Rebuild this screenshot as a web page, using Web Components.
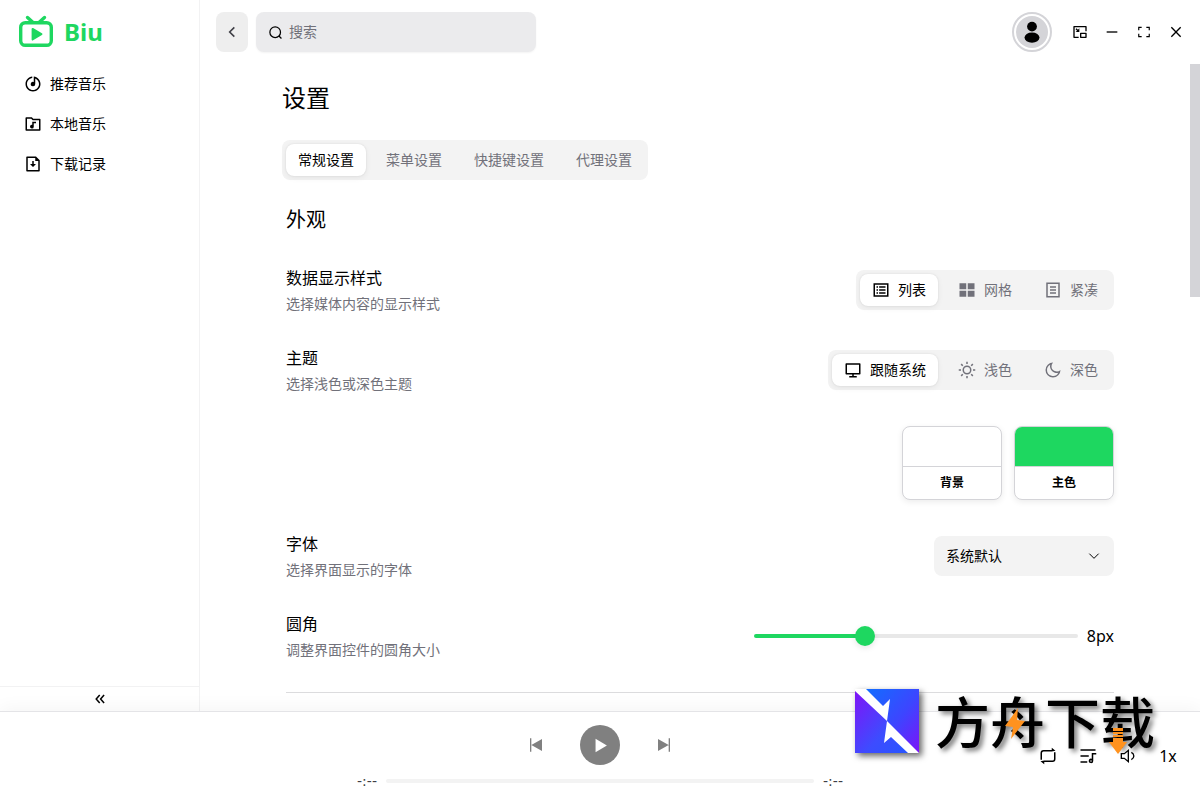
<!DOCTYPE html>
<html lang="zh-CN">
<head>
<meta charset="utf-8">
<title>Biu</title>
<style>
html,body{height:100%;margin:0}
body{font-family:"Noto Sans","Noto Sans CJK SC",sans-serif;font-size:14px;line-height:20px;color:#000;background:#fff;
--primary:#1ed760;--muted:#71717a;--soft:#f3f3f3;--edge:#d4d4d8}
</style>
</head>
<body>
<biu-app></biu-app>
<script>
const define=(name,html)=>customElements.define(name,class extends HTMLElement{
  constructor(){
    super();
    const t=document.createElement('template');
    t.innerHTML='<style>*{box-sizing:border-box}button,input,select{font:inherit;color:inherit;margin:0}button{border:0;padding:0;background:none}</style>'+html;
    this.attachShadow({mode:'open'}).append(t.content.cloneNode(true));
  }
});

const ICONS={
  logo:'<g fill="none" stroke="currentColor" stroke-width="3.4" stroke-linecap="round"><rect x="2.7" y="8.7" width="30.6" height="22.6" rx="4.6"/><path d="M9.5 3.5 14.5 8M26.5 3.5 21.5 8"/></g><path fill="currentColor" stroke="currentColor" stroke-width="2" stroke-linejoin="round" d="M14.6 14.900 23.4 20.200 14.6 25.500Z"/>',
  disc:'<path d="M15 4.58V12a3 3 0 1 1-2-2.83V2.05C18.05 2.55 22 6.81 22 12c0 5.52-4.48 10-10 10S2 17.52 2 12C2 6.81 5.95 2.55 11 2.05v2.01C7.05 4.55 4 7.92 4 12c0 4.42 3.58 8 8 8s8-3.58 8-8c0-3.36-2.07-6.23-5-7.42Z"/>',
  folder:'<path d="M12.41 5H21a1 1 0 0 1 1 1v14a1 1 0 0 1-1 1H3a1 1 0 0 1-1-1V4a1 1 0 0 1 1-1h7.41l2 2ZM4 5v14h16V7h-8.41l-2-2H4Zm7 8.05V9h5v2h-3v4.5a2.5 2.5 0 1 1-2-2.45Z"/>',
  file:'<path d="M13 12h3l-4 4-4-4h3V8h2v4Zm2-8H5v16h14V8h-4V4ZM3 3a1 1 0 0 1 1-1h12l5 5v14a1 1 0 0 1-1 1H4a1 1 0 0 1-1-1V3Z"/>',
  left:'<path fill="none" stroke="currentColor" stroke-width="2.4" d="M15.5 5 8.500 12l7 7"/>',
  search:'<g fill="none" stroke="currentColor" stroke-width="2"><circle cx="11.5" cy="11.5" r="8.5"/><path d="m17.5 17.5 4 4"/></g>',
  user:'<circle cx="12" cy="6.6" r="4.9"/><ellipse cx="12" cy="17.6" rx="7.5" ry="5.1"/>',
  pip:'<path d="M21 3a1 1 0 0 1 1 1v7h-2V5H4v14h6v2H3a1 1 0 0 1-1-1V4a1 1 0 0 1 1-1h18Zm0 10a1 1 0 0 1 1 1v6a1 1 0 0 1-1 1h-8a1 1 0 0 1-1-1v-6a1 1 0 0 1 1-1h8Zm-1 2h-6v4h6v-4ZM6.7 6.3 8.95 8.55 11 6.5V12H5.5l2.05-2.05L5.3 7.7Z"/>',
  minus:'<path d="M4 11h16v2H4z"/>',
  full:'<path d="M8 3v2H4v4H2V3h6ZM2 21v-6h2v4h4v2H2Zm20 0h-6v-2h4v-4h2v6Zm0-12h-2V5h-4V3h6v6Z"/>',
  close:'<path fill="none" stroke="currentColor" stroke-width="2" d="m5 5 14 14M19 5 5 19"/>',
  list:'<path fill-rule="evenodd" d="M2 3h20v18H2ZM4 5v14h16V5ZM6 7h2v2H6Zm3.500 0H18v2H9.500ZM6 11h2v2H6Zm3.500 0H18v2H9.500ZM6 15h2v2H6Zm3.500 0H18v2H9.500Z"/>',
  grid:'<path d="M2 3h9v8H2Zm11 0h9v8h-9ZM2 13h9v8H2Zm11 0h9v8h-9Z"/>',
  page:'<path fill-rule="evenodd" d="M3 2h18v20H3ZM5 4v16h14V4ZM8 7h8v2H8Zm0 4h8v2H8Zm0 4h8v2H8Z"/>',
  screen:'<path d="M4 16h16V5H4v11Zm9 2v2h4v2H7v-2h4v-2H3a1 1 0 0 1-1-1V4a1 1 0 0 1 1-1h18a1 1 0 0 1 1 1v13a1 1 0 0 1-1 1h-8Z"/>',
  sun:'<g fill="none" stroke="currentColor" stroke-width="2"><circle cx="12" cy="12" r="5"/><path d="M12 1v3M12 20v3M1 12h3M20 12h3M4.200 4.200l2.200 2.200M17.600 17.600l2.200 2.200M4.200 19.800l2.200-2.200M17.600 6.400l2.200-2.200"/></g>',
  moon:'<path d="M10 7a7 7 0 0 0 12 4.900V12A10 10 0 1 1 12.100 2 7 7 0 0 0 10 7Zm-6 5a8 8 0 0 0 15.060 3.760A9 9 0 0 1 8.240 4.940 8 8 0 0 0 4 12Z"/>',
  down:'<path fill="none" stroke="currentColor" stroke-width="1.500" d="m5 8.500 7 7 7-7"/>',
  fold:'<path fill="none" stroke="currentColor" stroke-width="2.600" d="m11.500 5-6 7 6 7M19 5l-6 7 6 7"/>',
  prev:'<path d="M3 2h2v20H3ZM5 12 21 3v18Z"/>',
  next:'<path d="M19 2h2v20h-2ZM19 12 3 3v18Z"/>',
  play:'<path d="M5 2.500v19L21 12Z"/>',
  repeat:'<path d="M6 4h11V1l5 4-5 1H6a2 2 0 0 0-2 2v9H2V8a4 4 0 0 1 4-4Zm12 16H7v3l-5-4 5-1h11a2 2 0 0 0 2-2V7h2v9a4 4 0 0 1-4 4Z"/>',
  queue:'<path d="M2 3h20v2H2Zm0 8h11v2H2Zm0 8h9v2H2ZM17 8h6v2h-4v8.500a3 3 0 1 1-2-2.830V8Zm-1 9.500a1 1 0 1 0 0 2 1 1 0 0 0 0-2Z"/>',
  volume:'<g fill="none" stroke="currentColor" stroke-width="2"><path d="M2 8.500h4.500l6-5v17l-6-5H2ZM17 6.500c5 2.500 5 8.500 0 11"/></g>'
};
customElements.define('ui-icon',class extends HTMLElement{
  connectedCallback(){
    if(this.shadowRoot) return;
    const n=this.getAttribute('name'),s=this.getAttribute('size')||18,b=n==='logo'?36:24;
    this.attachShadow({mode:'open'}).innerHTML=`<style>:host{display:inline-flex;flex:none}svg{display:block}</style><svg width="${s}" height="${s}" viewBox="0 0 ${b} ${b}" fill="currentColor" aria-hidden="true">${ICONS[n]}</svg>`;
  }
});

define('nav-item',`<style>
:host{display:block}
a{display:flex;align-items:center;gap:8px;height:40px;padding:0 16px;color:#000;text-decoration:none}
</style><a href="#"><slot name="icon"></slot><slot></slot></a>`);

define('side-bar',`<style>
:host{display:flex;flex-direction:column;width:200px;border-right:1px solid #f2f2f3;box-sizing:border-box}
.brand{display:flex;align-items:center;gap:10px;height:64px;padding:0 18px;color:var(--primary);font-size:24px;font-weight:700;line-height:32px}
nav{flex:1;padding:0 8px}
button{height:25px;border-top:1px solid #f2f2f3;display:flex;align-items:center;justify-content:center}
</style>
<div class="brand"><ui-icon name="logo" size="36"></ui-icon><span>Biu</span></div>
<nav>
<nav-item><ui-icon slot="icon" name="disc"></ui-icon>推荐音乐</nav-item>
<nav-item><ui-icon slot="icon" name="folder"></ui-icon>本地音乐</nav-item>
<nav-item><ui-icon slot="icon" name="file"></ui-icon>下载记录</nav-item>
</nav>
<button aria-label="收起"><ui-icon name="fold" size="14"></ui-icon></button>`);

define('top-bar',`<style>
:host{display:flex;align-items:center;height:64px;padding:0 8px 0 16px;gap:8px}
.back{width:32px;height:40px;border-radius:8px;background:#eee;display:grid;place-items:center;color:#3f3f46}
label{display:flex;align-items:center;gap:6px;width:280px;height:40px;padding:0 12px;border-radius:8px;background:#ebebed;box-shadow:0 1px 2px #0000000d}
input{flex:1;min-width:0;border:0;background:none;outline:0;padding:0}
input::placeholder{color:var(--muted);opacity:1}
.win{margin-left:auto;display:flex;align-items:center}
.win button{width:32px;height:32px;display:grid;place-items:center}
.win .avatar{width:40px;height:40px;border-radius:50%;border:2px solid var(--edge);padding:2px;background:var(--edge) content-box;margin-right:12px}
</style>
<button class="back" aria-label="返回"><ui-icon name="left" size="16"></ui-icon></button>
<label><ui-icon name="search" size="15"></ui-icon><input type="text" placeholder="搜索" aria-label="搜索"></label>
<div class="win">
<button class="avatar" aria-label="用户"><ui-icon name="user" size="24"></ui-icon></button>
<button aria-label="小窗"><ui-icon name="pip" size="16"></ui-icon></button>
<button aria-label="最小化"><ui-icon name="minus" size="16"></ui-icon></button>
<button aria-label="全屏"><ui-icon name="full" size="14"></ui-icon></button>
<button aria-label="关闭"><ui-icon name="close" size="16"></ui-icon></button>
</div>`);

define('seg-item',`<style>
:host{display:block}
button{display:flex;align-items:center;gap:8px;height:32px;padding:0 12px;border-radius:8px;color:var(--muted);white-space:nowrap}
:host([selected]) button{background:#fff;color:#000;box-shadow:0 0 2px #0000001a,0 2px 6px #0000000f}
</style><button type="button"><slot name="icon"></slot><span><slot></slot></span></button>`);

define('seg-group',`<style>
:host{display:inline-flex;gap:8px;padding:4px;border-radius:8px;background:var(--soft)}
</style><slot></slot>`);

define('setting-row',`<style>
:host{display:flex;align-items:center;justify-content:space-between;gap:24px}
.name{font-size:16px;line-height:24px;margin-bottom:4px}
.hint{color:var(--muted)}
</style>
<div><div class="name"><slot name="name"></slot></div><div class="hint"><slot name="hint"></slot></div></div>
<slot></slot>`);

define('color-card',`<style>
:host{display:block;width:100px}
button{display:block;width:100%;border:1px solid var(--edge);border-radius:8px;overflow:hidden;background:#fff;box-shadow:0 2px 6px #00000014;font-size:12px;font-weight:600}
i{display:block;height:40px;background:var(--swatch);border-bottom:1px solid var(--edge)}
span{display:block;line-height:32px}
</style><button type="button"><i></i><span><slot></slot></span></button>`);

define('font-select',`<style>
:host{display:grid;width:180px;align-items:center}
select,ui-icon{grid-area:1/1}
select{appearance:none;width:100%;height:40px;border:0;border-radius:8px;padding:0 12px;background:var(--soft)}
ui-icon{justify-self:end;margin-right:12px;pointer-events:none}
</style><select aria-label="字体"><option>系统默认</option></select><ui-icon name="down" size="16"></ui-icon>`);

define('radius-slider',`<style>
:host{display:flex;align-items:center;gap:8px;width:360px;font-size:16px;line-height:24px}
input{appearance:none;flex:1;min-width:0;height:20px;background:none}
input::-webkit-slider-runnable-track{height:4px;border-radius:2px;background:linear-gradient(90deg,var(--primary) 34%,#e8e8e8 34%)}
input::-webkit-slider-thumb{appearance:none;width:20px;height:20px;margin-top:-8px;border-radius:50%;background:var(--primary);box-shadow:0 2px 6px #0000001a}
output{width:28px;text-align:right}
</style><input type="range" min="0" max="24" value="8" aria-label="圆角"><output>8px</output>`);

define('settings-page',`<style>
:host{display:block;position:relative;overflow:hidden}
main{max-width:900px;margin:0 auto;padding:18px 32px}
h1{font-size:24px;line-height:32px;font-weight:400;margin:0 0 26px}
section{display:flex;flex-direction:column;gap:32px;padding:26px 4px}
h2{font-size:20px;line-height:28px;font-weight:400;margin:0}
.cards{display:flex;gap:12px;justify-content:flex-end}
.green{--swatch:var(--primary)}
hr{width:100%;margin:0;border:0;border-top:1px solid #dcdcde}
.bar{position:absolute;right:0;top:0;width:10px;height:36%;background:var(--edge)}
</style>
<main>
<h1>设置</h1>
<seg-group><seg-item selected>常规设置</seg-item><seg-item>菜单设置</seg-item><seg-item>快捷键设置</seg-item><seg-item>代理设置</seg-item></seg-group>
<section>
<h2>外观</h2>
<setting-row><span slot="name">数据显示样式</span><span slot="hint">选择媒体内容的显示样式</span>
<seg-group><seg-item selected><ui-icon slot="icon" name="list"></ui-icon>列表</seg-item><seg-item><ui-icon slot="icon" name="grid"></ui-icon>网格</seg-item><seg-item><ui-icon slot="icon" name="page"></ui-icon>紧凑</seg-item></seg-group></setting-row>
<setting-row><span slot="name">主题</span><span slot="hint">选择浅色或深色主题</span>
<seg-group><seg-item selected><ui-icon slot="icon" name="screen"></ui-icon>跟随系统</seg-item><seg-item><ui-icon slot="icon" name="sun"></ui-icon>浅色</seg-item><seg-item><ui-icon slot="icon" name="moon"></ui-icon>深色</seg-item></seg-group></setting-row>
<div class="cards"><color-card>背景</color-card><color-card class="green">主色</color-card></div>
<setting-row><span slot="name">字体</span><span slot="hint">选择界面显示的字体</span><font-select></font-select></setting-row>
<setting-row><span slot="name">圆角</span><span slot="hint">调整界面控件的圆角大小</span><radius-slider></radius-slider></setting-row>
<hr>
</section>
</main>
<div class="bar"></div>`);

define('player-bar',`<style>
:host{display:grid;grid-template-columns:1fr 488px 1fr;align-items:center;height:89px;border-top:1px solid #e4e4e7;background:#fff;box-shadow:0 -4px 16px #0000000a;position:relative;box-sizing:border-box}
.mid{grid-column:2;display:grid;gap:8px;padding-top:2px}
.keys{display:flex;justify-content:center;align-items:center;gap:28px;color:#808080}
.keys button{width:32px;height:32px;display:grid;place-items:center}
.keys .play{width:40px;height:40px;border-radius:50%;background:#808080;color:#fff}
.time{display:flex;align-items:center;gap:8px;font-family:"DejaVu Sans",sans-serif;line-height:16px;color:#3f3f46}
.time span{width:22px;text-align:center;white-space:nowrap}
.track{flex:1;height:4px;border-radius:2px;background:var(--soft)}
.tools{display:flex;justify-content:flex-end;gap:8px;padding-right:16px;font-size:16px}
.tools button{width:32px;height:32px;display:grid;place-items:center}
</style>
<div class="mid">
<div class="keys"><button aria-label="上一首"><ui-icon name="prev" size="16"></ui-icon></button><button class="play" aria-label="播放"><ui-icon name="play" size="17"></ui-icon></button><button aria-label="下一首"><ui-icon name="next" size="16"></ui-icon></button></div>
<div class="time"><span>-:--</span><div class="track"></div><span>-:--</span></div>
</div>
<div class="tools"><button aria-label="循环"><ui-icon name="repeat"></ui-icon></button><button aria-label="播放列表"><ui-icon name="queue"></ui-icon></button><button aria-label="音量"><ui-icon name="volume" size="16"></ui-icon></button><button>1x</button></div>`);

define('site-mark',`<style>
:host{position:absolute;right:45px;bottom:47px;display:flex;align-items:flex-end;gap:16px;pointer-events:none}
.logo{filter:drop-shadow(3px 3px 3px #0009);display:block}
.word{position:relative;font:500 55px/68px "Noto Sans CJK SC",sans-serif;color:#000;text-shadow:3px 3px 5px #0008;white-space:nowrap}
.deco{position:absolute;left:0;top:0}
</style>
<svg class="logo" width="64" height="64" viewBox="0 0 64 64"><defs><linearGradient id="b" x1="0" y1="0" x2="1" y2="1"><stop stop-color="#126eff"/><stop offset=".55" stop-color="#3d45ff"/><stop offset="1" stop-color="#7c13f8"/></linearGradient><linearGradient id="c" x1="0" y1="0" x2="1" y2="1"><stop stop-color="#8014f7"/><stop offset=".6" stop-color="#3d4cff"/><stop offset="1" stop-color="#2856ff"/></linearGradient></defs>
<path fill="#fff" d="M0 0h64v64H0z"/><path fill="url(#b)" d="M11 0H64V64L32 32 35 10 28 17Z"/><path fill="url(#c)" d="M0 2 32 32 29 54 36 48 53 64H0Z"/></svg>
<span class="word">方舟下载<svg class="deco" width="220" height="70" viewBox="0 0 220 70" fill="#ff921e"><path d="M83 23 70 41l8 1-2 12 14-18-8-1Z"/><path d="M178 43h10v3h-10zM178 47h10v2h-10zM178 50h10v2h-10zM178 53h10v4h4l-9 12-9-12h4z"/></svg></span>`);

define('biu-app',`<style>
:host{display:grid;grid-template:64px minmax(0,1fr) auto/auto minmax(0,1fr);height:100vh;position:relative;overflow:hidden}
side-bar{grid-row:1/3}
player-bar{grid-column:1/3}
</style><side-bar></side-bar><top-bar></top-bar><settings-page></settings-page><player-bar></player-bar><site-mark></site-mark>`);
</script>
</body>
</html>
